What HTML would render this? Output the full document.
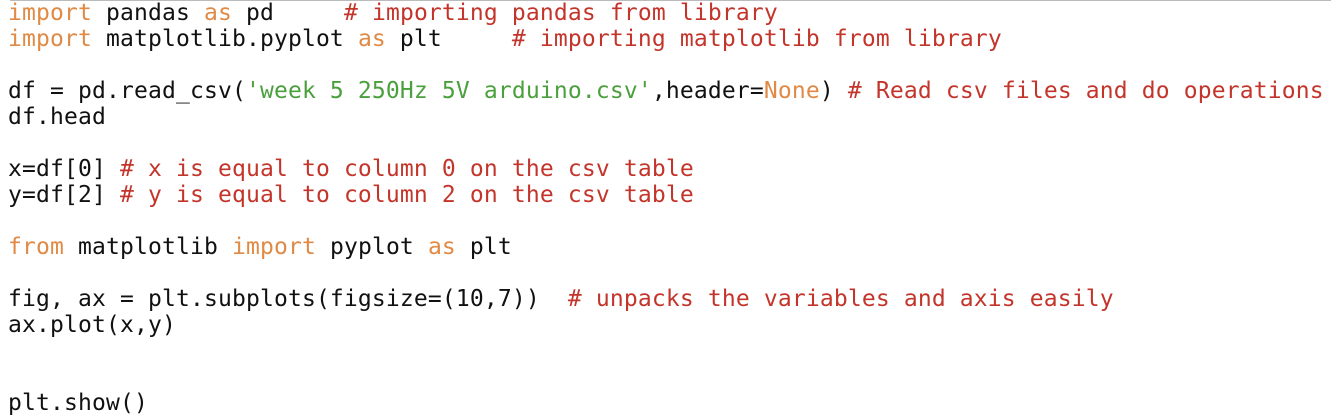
<!DOCTYPE html>
<html><head><meta charset="utf-8"><style>
html,body{margin:0;padding:0;background:#fff;width:1331px;height:419px;overflow:hidden}
.top{position:absolute;left:10px;right:0;top:0;height:1px;background:#bbb}
pre{position:absolute;left:8px;top:0;margin:0;font-family:"DejaVu Sans Mono","Liberation Mono",monospace;font-size:23px;letter-spacing:0.15px;line-height:26px;color:#111}
.k{color:#e08a45}.c{color:#c3352b}.s{color:#4aa03c}
</style></head><body><div class="top"></div>
<pre><span class="k">import</span> pandas <span class="k">as</span> pd     <span class="c"># importing pandas from library</span>
<span class="k">import</span> matplotlib.pyplot <span class="k">as</span> plt     <span class="c"># importing matplotlib from library</span>

df = pd.read_csv(<span class="s">'week 5 250Hz 5V arduino.csv'</span>,header=<span class="k">None</span>) <span class="c"># Read csv files and do operations</span>
df.head

x=df[0] <span class="c"># x is equal to column 0 on the csv table</span>
y=df[2] <span class="c"># y is equal to column 2 on the csv table</span>

<span class="k">from</span> matplotlib <span class="k">import</span> pyplot <span class="k">as</span> plt

fig, ax = plt.subplots(figsize=(10,7))  <span class="c"># unpacks the variables and axis easily</span>
ax.plot(x,y)


plt.show()</pre>
</body></html>
